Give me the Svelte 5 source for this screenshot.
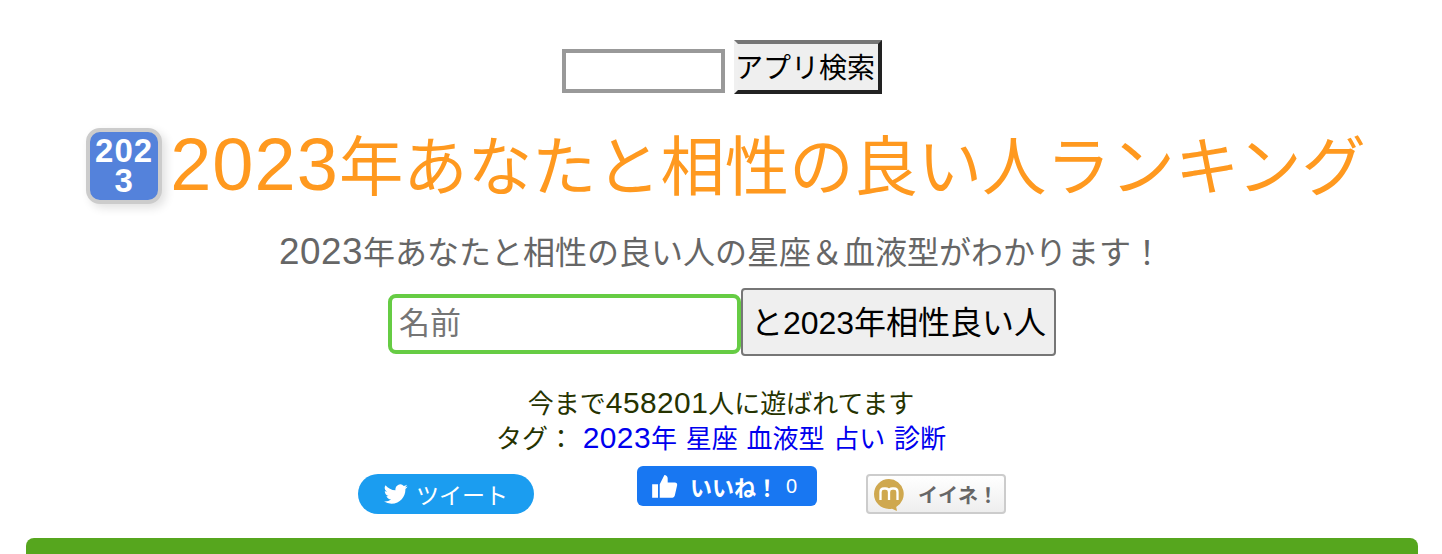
<script lang="ts">
  const tags = ["星座", "血液型", "占い", "診断"];
  let search = $state("");
  let name = $state("");
</script>

<div class="page">
  <form class="search" onsubmit={(e) => e.preventDefault()}>
    <input class="search-input" type="text" bind:value={search} />
    <input class="search-btn" type="submit" value="アプリ検索" />
  </form>

  <h1 class="title">
    <span class="app-icon">2023</span>
    <span class="title-text"><span class="num">2023</span>年あなたと相性の良い人ランキング</span>
  </h1>

  <p class="lead"><span class="num">2023</span>年あなたと相性の良い人の星座＆血液型がわかります！</p>

  <form class="diagnose" onsubmit={(e) => e.preventDefault()}>
    <input class="name-input" type="text" placeholder="名前" bind:value={name} />
    <input class="go-btn" type="submit" value="と2023年相性良い人" />
  </form>

  <div class="meta">
    <div>今まで<span class="num">458201</span>人に遊ばれてます</div>
    <div class="tags">
      タグ：
      <a href="#top"><span class="num">2023</span>年</a>
      {#each tags as tag}
        {" "}<a href="#top">{tag}</a>
      {/each}
    </div>
  </div>

  <div class="social">
    <a class="tweet" href="#top">
      <svg viewBox="0 0 24 24" width="24" height="24" aria-hidden="true">
        <path fill="#fff" d="M23.6 4.6c-.9.4-1.8.7-2.8.8 1-.6 1.8-1.5 2.1-2.7-.9.6-2 1-3.1 1.2a4.9 4.9 0 0 0-8.3 4.4C7.500 8.100 3.900 6.200 1.500 3.200a4.900 4.900 0 0 0 1.500 6.500c-.8 0-1.500-.2-2.200-.6v.1c0 2.400 1.700 4.400 3.900 4.800-.7.200-1.500.2-2.200.1.600 2 2.400 3.400 4.600 3.400a9.900 9.900 0 0 1-7.200 2 13.900 13.900 0 0 0 7.500 2.200c9 0 14-7.500 14-14v-.6c1-.7 1.800-1.500 2.200-2.500z" />
      </svg>
      <span>ツイート</span>
    </a>

    <a class="like" href="#top">
      <svg viewBox="0 0 24 24" width="28" height="28" aria-hidden="true">
        <path fill="#fff" d="M1 10.500h5V22H1zM7.500 10.500 11.500 2.500c1.500 0 2.800 1.200 2.800 2.800V9h6.200c1.300 0 2.200 1.200 1.900 2.400l-2 8.800c-.2 1-1.100 1.800-2.100 1.800H7.500z" />
      </svg>
      <span class="like-label">いいね！</span>
      <span class="like-count">0</span>
    </a>

    <a class="mixi" href="#top">
      <svg viewBox="0 0 34 34" width="34" height="34" aria-hidden="true">
        <path fill="#cfa84f" d="M17 2a15 15 0 1 0 0 30c1 0 2-.1 3-.3l5 2.300-.8-4A15 15 0 0 0 17 2z" />
        <path fill="none" stroke="#fff" stroke-width="2.300" d="M8.500 23v-8q0-3.500 3.500-3.500h1.500q3.500 0 3.500 3.500v8m0-8q0-3.500 3.500-3.500H22q3.500 0 3.500 3.500v8" />
      </svg>
      <span>イイネ！</span>
    </a>
  </div>

  <div class="green-bar"></div>
</div>

<style>
  :global(body) {
    margin: 0;
    background: #fff;
  }
  .page {
    height: 554px;
    overflow: hidden;
    padding-top: 40px;
    box-sizing: border-box;
    text-align: center;
    font-family: "Liberation Sans", "Noto Sans CJK JP", sans-serif;
  }
  /* digits in the reference are wider than Liberation's */
  .num {
    font-size: 1.15em;
    letter-spacing: 0.015em;
    line-height: 1;
  }
  .search {
    display: flex;
    justify-content: center;
    align-items: flex-end;
    height: 54px;
    margin-left: 2px;
  }
  .search-input {
    box-sizing: border-box;
    width: 163px;
    height: 44px;
    margin: 0 9px 1px 0;
    border: 4px solid #999;
    background: #fff;
    padding: 0;
  }
  .search-btn {
    box-sizing: border-box;
    width: 148px;
    height: 54px;
    padding: 0 0 2px;
    border-style: solid;
    border-width: 4px;
    border-color: #767676 #222 #222 #f0f0f0;
    background: #efefef;
    color: #000;
    font-family: inherit;
    font-size: 28px;
    text-align: left;
    text-indent: -3px;
  }
  .title {
    display: flex;
    justify-content: center;
    align-items: center;
    gap: 8px;
    margin: 34px 0 0 10px;
    height: 76px;
    font-size: 64.3px;
    font-weight: 400;
    line-height: 76px;
    color: #ff991f;
  }
  .title-text {
    padding-top: 2px;
  }
  .app-icon {
    box-sizing: border-box;
    flex: none;
    width: 76px;
    height: 76px;
    padding: 4px 2px 0;
    border: 4px solid #ccc;
    border-radius: 14px;
    background: #5482db;
    box-shadow: 4px 4px 10px rgba(0, 0, 0, 0.12);
    color: #fff;
    font-size: 33px;
    font-weight: 700;
    letter-spacing: 1px;
    line-height: 30px;
    word-break: break-all;
  }
  .lead {
    margin: 27px 0 0;
    font-size: 32px;
    line-height: 44px;
    color: #666;
  }
  .diagnose {
    display: flex;
    justify-content: center;
    align-items: flex-end;
    margin: 13px 0 0 2px;
    height: 68px;
  }
  .name-input {
    box-sizing: border-box;
    width: 353px;
    height: 60px;
    margin: 0 0 2px 0;
    padding: 0 7px;
    border: 4px solid #66cc44;
    border-radius: 8px;
    outline: none;
    font-family: inherit;
    font-size: 31px;
    color: #000;
  }
  .name-input::placeholder {
    color: #757575;
  }
  .go-btn {
    box-sizing: border-box;
    width: 315px;
    height: 68px;
    padding: 0 0 4px;
    border: 2px solid #767676;
    border-radius: 4px;
    background: #efefef;
    color: #000;
    font-family: inherit;
    font-size: 32px;
  }
  .meta {
    margin-top: 31px;
    font-size: 26px;
    line-height: 35px;
    color: #263300;
  }
  .tags a {
    color: #0000ee;
    text-decoration: none;
    margin-left: 1.5px;
  }
  .social {
    position: relative;
    height: 60px;
    margin-top: 9px;
  }
  .tweet {
    position: absolute;
    left: 358px;
    top: 8px;
    display: flex;
    align-items: center;
    gap: 8px;
    box-sizing: border-box;
    width: 176px;
    height: 40px;
    padding-left: 26px;
    border-radius: 20px;
    background: #1b9df0;
    color: #fff;
    font-size: 23px;
    text-decoration: none;
  }
  .like {
    position: absolute;
    left: 637px;
    top: 0;
    display: flex;
    align-items: center;
    box-sizing: border-box;
    width: 180px;
    height: 40px;
    padding-left: 14px;
    border-radius: 6px;
    background: #1877f2;
    color: #fff;
    text-decoration: none;
  }
  .like-label {
    margin-left: 11px;
    font-size: 22px;
    font-weight: 700;
  }
  .like-count {
    margin-left: 8px;
    font-size: 20px;
  }
  .mixi {
    position: absolute;
    left: 866px;
    top: 8px;
    display: flex;
    align-items: center;
    gap: 12px;
    box-sizing: border-box;
    width: 140px;
    height: 40px;
    padding-left: 4px;
    border: 2px solid #ccc;
    border-radius: 4px;
    background: linear-gradient(#fff, #eee);
    color: #666;
    font-size: 20px;
    font-weight: 700;
    text-decoration: none;
  }
  .green-bar {
    height: 40px;
    margin: 12px 24px 0 26px;
    border-radius: 8px 8px 0 0;
    background: #56a61e;
  }
</style>
